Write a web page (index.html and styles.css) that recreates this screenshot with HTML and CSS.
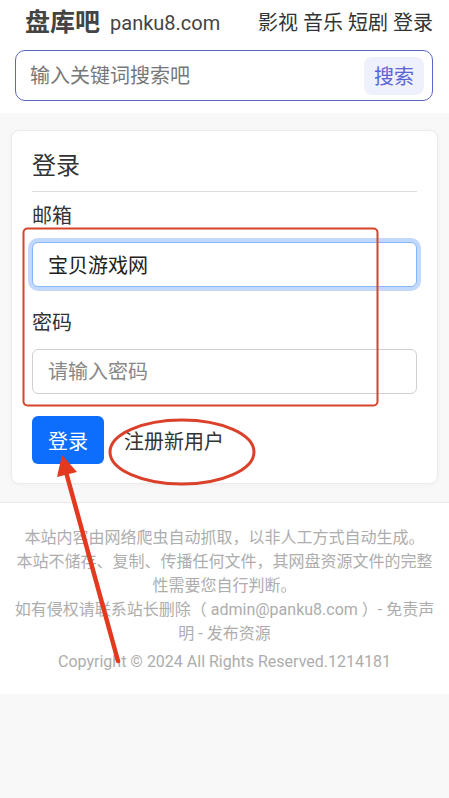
FILE: index.html
```html
<!DOCTYPE html>
<html lang="zh">
<head>
  <meta charset="utf-8">
  <title>登录 - 盘库吧</title>
  <link rel="stylesheet" href="styles.css">
</head>
<body>
  <header class="top">
    <div class="brand-row">
      <div class="brand">
        <span class="logo">盘库吧</span>
        <span class="domain">panku8.com</span>
      </div>
      <nav class="nav">
        <a href="#">影视</a>
        <a href="#">音乐</a>
        <a href="#">短剧</a>
        <a href="#">登录</a>
      </nav>
    </div>
    <form class="search">
      <input type="text" class="search-input" placeholder="输入关键词搜索吧">
      <button type="button" class="search-btn">搜索</button>
    </form>
  </header>

  <main class="main">
    <div class="card">
      <h2 class="card-title">登录</h2>
      <div class="field">
        <label class="field-label">邮箱</label>
        <input type="text" class="field-input focused" value="宝贝游戏网">
      </div>
      <div class="field">
        <label class="field-label">密码</label>
        <input type="password" class="field-input" placeholder="请输入密码">
      </div>
      <div class="actions">
        <button type="button" class="btn-login">登录</button>
        <a href="#" class="register">注册新用户</a>
      </div>
    </div>
  </main>

  <footer class="footer">
    <p>本站内容由网络爬虫自动抓取，以非人工方式自动生成。</p>
    <p>本站不储存、复制、传播任何文件，其网盘资源文件的完整性需要您自行判断。</p>
    <p>如有侵权请联系站长删除（ admin@panku8.com ）- 免责声明 - 发布资源</p>
    <p class="copyright">Copyright © 2024 All Rights Reserved.1214181</p>
  </footer>

  <!-- red markup drawn on top of the screenshot -->
  <svg class="marks" width="449" height="798" viewBox="0 0 449 798">
    <rect x="23.5" y="228.5" width="354" height="177" rx="4" fill="none" stroke="#d5452b" stroke-width="2"/>
    <ellipse cx="182" cy="452" rx="72" ry="32" fill="none" stroke="#d9412a" stroke-width="3"/>
    <line x1="118" y1="661" x2="66" y2="472" stroke="#e2391f" stroke-width="4.5" stroke-linecap="round"/>
    <polygon points="62,455 77,472 57,477" fill="#e2391f"/>
  </svg>
</body>
</html>
```

FILE: styles.css
```css
body {
  margin: 0;
  background-color: #f8f8f9;
  font-family: Roboto, "Noto Sans CJK SC", sans-serif;
  color: #333;
  position: relative;
  min-height: 798px;
}

a {
  color: inherit;
  text-decoration: none;
}

/* header */
.top {
  background-color: #fff;
  padding: 8px 16px 12px 15px;
}

.brand-row {
  display: flex;
  justify-content: space-between;
  align-items: center;
  height: 30px;
  padding-left: 10px;
}

.brand {
  display: flex;
  align-items: center;
  color: #444;
}

.logo {
  font-size: 25px;
  font-weight: 700;
  line-height: 30px;
}

.domain {
  font-size: 20px;
  line-height: 30px;
  margin-left: 10px;
}

.nav {
  display: flex;
  gap: 5px;
  font-size: 20px;
  line-height: 30px;
}

.search {
  display: flex;
  align-items: center;
  margin: 12px 0 0;
  height: 51px;
  box-sizing: border-box;
  border: 1px solid #5b67c4;
  border-radius: 10px;
  padding: 0 8px 0 14px;
}

.search-input {
  flex: 1;
  border: none;
  outline: none;
  font-family: inherit;
  font-size: 20px;
  color: #333;
  background: transparent;
  padding: 0;
}

.search-input::placeholder {
  color: #777;
}

.search-btn {
  width: 60px;
  height: 38px;
  border: none;
  border-radius: 8px;
  background-color: #eef0fb;
  color: #5965d3;
  font-family: inherit;
  font-size: 20px;
  padding: 0;
}

/* login card */
.main {
  padding: 17px 11px 18px;
}

.card {
  background-color: #fff;
  border: 1px solid #ececec;
  border-radius: 8px;
  padding: 20px 20px 19px;
  box-shadow: 0 1px 4px rgba(0, 0, 0, 0.04);
}

.card-title {
  margin: 0;
  font-size: 24px;
  font-weight: 400;
  line-height: 30px;
  padding-bottom: 10px;
  border-bottom: 1px solid #dedede;
  margin-bottom: 9px;
}

.field {
  margin-bottom: 21px;
}

.field-label {
  display: block;
  font-size: 20px;
  line-height: 30px;
  margin-bottom: 11px;
}

.field-input {
  display: block;
  width: 100%;
  box-sizing: border-box;
  height: 45px;
  border: 1px solid #d0d0d0;
  border-radius: 6px;
  padding: 0 15px;
  font-family: inherit;
  font-size: 20px;
  color: #222;
  outline: none;
}

.field-input::placeholder {
  color: #888;
}

.field-input.focused {
  border-color: #86b7fe;
  box-shadow: 0 0 0 4px #c2d9fd;
}

.actions {
  display: flex;
  align-items: center;
  gap: 20px;
  margin-top: 22px;
}

.btn-login {
  width: 72px;
  height: 48px;
  border: none;
  border-radius: 6px;
  background-color: #0d6efd;
  color: #fff;
  font-family: inherit;
  font-size: 20px;
  padding: 0;
}

.register {
  font-size: 20px;
  color: #333;
}

/* footer */
.footer {
  background-color: #fff;
  border-top: 1px solid #ebebeb;
  padding: 23px 14px 20px;
  text-align: center;
  color: #adadad;
  font-size: 16px;
  line-height: 24px;
}

.footer p {
  margin: 0;
}

.footer .copyright {
  margin-top: 4px;
}

.marks {
  position: absolute;
  top: 0;
  left: 0;
  pointer-events: none;
}
```
